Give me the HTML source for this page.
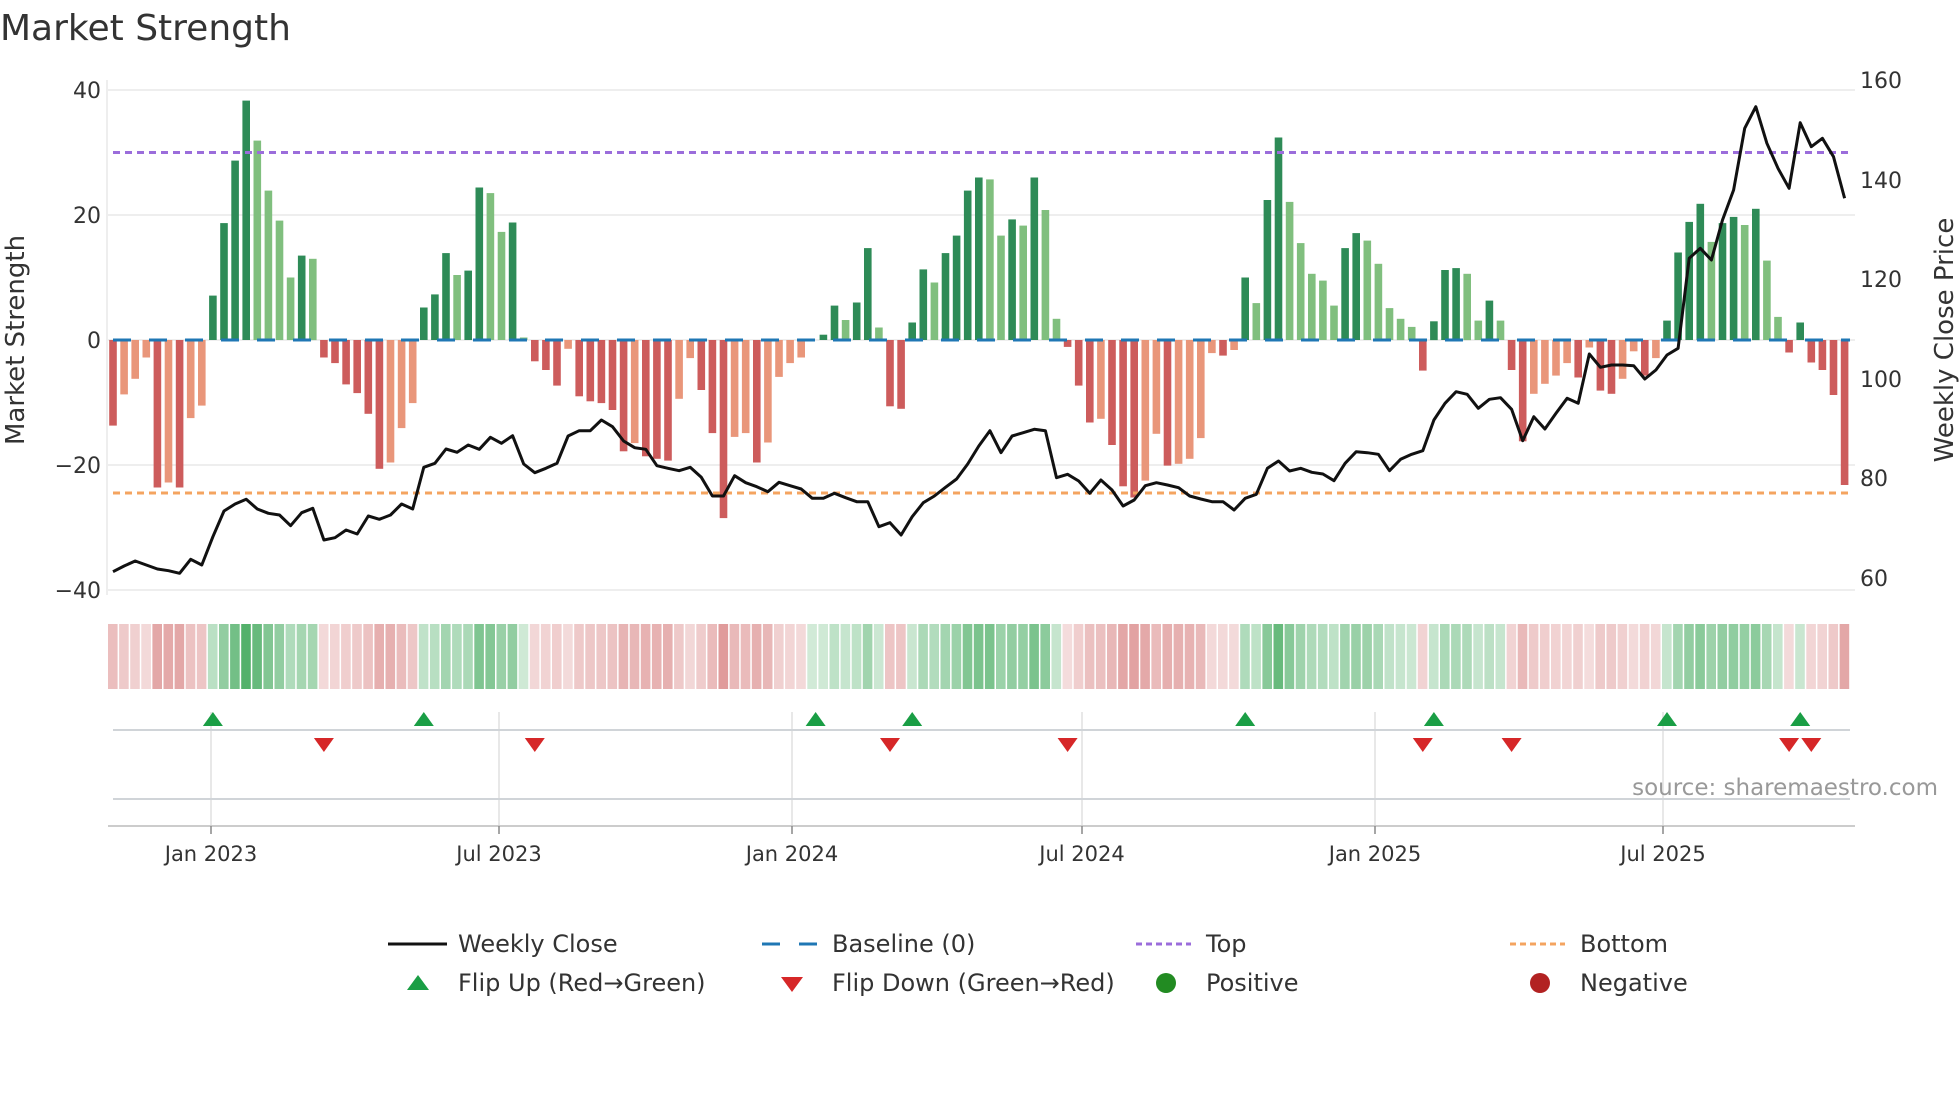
<!DOCTYPE html>
<html><head><meta charset="utf-8">
<style>
html,body{margin:0;padding:0;background:#fff;}
svg{display:block;font-family:"DejaVu Sans","Liberation Sans",sans-serif;}
</style></head>
<body>
<svg id="s" width="1960" height="1102" viewBox="0 0 1960 1102" xmlns="http://www.w3.org/2000/svg">
<rect width="1960" height="1102" fill="#fff"/>
<text x="0" y="40" font-size="36" fill="#333">Market Strength</text>
<g stroke="#eeeeee" stroke-width="2">
<line x1="108" y1="90" x2="1855" y2="90"/>
<line x1="108" y1="215" x2="1855" y2="215"/>
<line x1="108" y1="340" x2="1855" y2="340"/>
<line x1="108" y1="465" x2="1855" y2="465"/>
<line x1="108" y1="590" x2="1855" y2="590"/>
</g>
<line x1="107" y1="80" x2="107" y2="595" stroke="#eeeeee" stroke-width="2"/>
<g font-size="22" fill="#333" text-anchor="end">
<text x="101" y="98">40</text>
<text x="101" y="223">20</text>
<text x="101" y="348">0</text>
<text x="101" y="473">−20</text>
<text x="101" y="598">−40</text>
</g>
<g font-size="22" fill="#333">
<text x="1860" y="88">160</text>
<text x="1860" y="188">140</text>
<text x="1860" y="287">120</text>
<text x="1860" y="387">100</text>
<text x="1860" y="486">80</text>
<text x="1860" y="586">60</text>
</g>
<text transform="translate(24,340) rotate(-90)" font-size="26" fill="#333" text-anchor="middle">Market Strength</text>
<text transform="translate(1953,340) rotate(-90)" font-size="26" fill="#333" text-anchor="middle">Weekly Close Price</text>
<g id="bars"></g>
<line x1="113" y1="340" x2="1850" y2="340" stroke="#1f77b4" stroke-width="3" stroke-dasharray="18 18"/>
<line x1="113" y1="152.5" x2="1850" y2="152.5" stroke="#9b6ddb" stroke-width="3" stroke-dasharray="7 5"/>
<line x1="113" y1="493" x2="1850" y2="493" stroke="#f4a460" stroke-width="3" stroke-dasharray="7 5"/>
<polyline id="price" fill="none" stroke="#111" stroke-width="3" stroke-linejoin="round"/>
<g id="strip"></g>
<g stroke="#e8e8e8" stroke-width="2">
<line x1="211" y1="712" x2="211" y2="826"/>
<line x1="499" y1="712" x2="499" y2="826"/>
<line x1="792" y1="712" x2="792" y2="826"/>
<line x1="1082" y1="712" x2="1082" y2="826"/>
<line x1="1375" y1="712" x2="1375" y2="826"/>
<line x1="1663" y1="712" x2="1663" y2="826"/>
</g>
<line x1="113" y1="730" x2="1850" y2="730" stroke="#d0d4d8" stroke-width="2"/>
<line x1="113" y1="799" x2="1850" y2="799" stroke="#d0d4d8" stroke-width="2"/>
<line x1="108" y1="826" x2="1855" y2="826" stroke="#cccccc" stroke-width="2"/>
<g stroke="#888" stroke-width="1.5">
<line x1="211" y1="826" x2="211" y2="834"/>
<line x1="499" y1="826" x2="499" y2="834"/>
<line x1="792" y1="826" x2="792" y2="834"/>
<line x1="1082" y1="826" x2="1082" y2="834"/>
<line x1="1375" y1="826" x2="1375" y2="834"/>
<line x1="1663" y1="826" x2="1663" y2="834"/>
</g>
<g id="marks"></g>
<g font-size="21" fill="#333" text-anchor="middle">
<text x="211" y="861">Jan 2023</text>
<text x="499" y="861">Jul 2023</text>
<text x="792" y="861">Jan 2024</text>
<text x="1082" y="861">Jul 2024</text>
<text x="1375" y="861">Jan 2025</text>
<text x="1663" y="861">Jul 2025</text>
</g>
<text x="1938" y="795" font-size="23" fill="#999" text-anchor="end">source: sharemaestro.com</text>
<g font-size="24" fill="#333">
<line x1="388" y1="944" x2="447" y2="944" stroke="#111" stroke-width="3"/>
<text x="458" y="952">Weekly Close</text>
<line x1="762" y1="944" x2="817" y2="944" stroke="#1f77b4" stroke-width="3" stroke-dasharray="18 19"/>
<text x="832" y="952">Baseline (0)</text>
<line x1="1136" y1="944" x2="1191" y2="944" stroke="#9b6ddb" stroke-width="3" stroke-dasharray="6 4"/>
<text x="1206" y="952">Top</text>
<line x1="1510" y1="944" x2="1565" y2="944" stroke="#f4a460" stroke-width="3" stroke-dasharray="6 4"/>
<text x="1580" y="952">Bottom</text>
<polygon points="407,990 429,990 418,975" fill="#1a9e45"/>
<text x="458" y="991">Flip Up (Red→Green)</text>
<polygon points="781,977 803,977 792,992" fill="#d62728"/>
<text x="832" y="991">Flip Down (Green→Red)</text>
<circle cx="1166" cy="983" r="10" fill="#228b22"/>
<text x="1206" y="991">Positive</text>
<circle cx="1540" cy="983" r="10" fill="#b22222"/>
<text x="1580" y="991">Negative</text>
</g>
</svg>
<script>
var V=[[-13.7,1],[-8.7,0],[-6.2,0],[-2.8,0],[-23.6,1],[-22.8,0],[-23.6,1],[-12.5,0],[-10.5,0],[7.1,1],[18.7,1],[28.7,1],[38.3,1],[31.9,0],[23.9,0],[19.1,0],[10,0],[13.5,1],[13,0],[-2.8,1],[-3.7,1],[-7.1,1],[-8.5,1],[-11.8,1],[-20.6,1],[-19.6,0],[-14.1,0],[-10.1,0],[5.2,1],[7.3,1],[13.9,1],[10.4,0],[11.1,1],[24.4,1],[23.5,0],[17.3,0],[18.8,1],[0.4,0],[-3.4,1],[-4.8,1],[-7.3,1],[-1.4,0],[-9,1],[-9.8,1],[-10.1,1],[-11.2,1],[-17.8,1],[-16.5,0],[-18.6,1],[-19,1],[-19.3,1],[-9.4,0],[-2.9,0],[-8,1],[-14.9,1],[-28.5,1],[-15.5,0],[-14.9,0],[-19.6,1],[-16.4,0],[-5.9,0],[-3.7,0],[-2.8,0],[0,0],[0.85,1],[5.5,1],[3.2,0],[6,1],[14.7,1],[2,0],[-10.6,1],[-11,1],[2.8,1],[11.3,1],[9.2,0],[13.9,1],[16.7,1],[23.9,1],[26,1],[25.7,0],[16.7,0],[19.3,1],[18.3,0],[26,1],[20.8,0],[3.4,0],[-1.1,1],[-7.3,1],[-13.2,1],[-12.6,0],[-16.8,1],[-23.4,1],[-25.2,1],[-22.5,0],[-15,0],[-20.1,1],[-19.8,0],[-19,0],[-15.7,0],[-2.1,0],[-2.5,1],[-1.6,0],[10,1],[5.9,0],[22.4,1],[32.4,1],[22.1,0],[15.5,0],[10.6,0],[9.5,0],[5.5,0],[14.7,1],[17.1,1],[15.9,0],[12.2,0],[5.1,0],[3.4,0],[2.1,0],[-4.9,1],[3,1],[11.2,1],[11.5,1],[10.6,0],[3.1,0],[6.3,1],[3.1,0],[-4.8,1],[-16.2,1],[-8.6,0],[-7,0],[-5.7,0],[-3.7,0],[-6,1],[-1.2,0],[-8.1,1],[-8.6,1],[-6.2,0],[-1.8,0],[-5.7,1],[-2.9,0],[3.1,1],[14,1],[18.9,1],[21.8,1],[15.7,0],[18.7,1],[19.7,1],[18.4,0],[21,1],[12.7,0],[3.7,0],[-2,1],[2.8,1],[-3.6,1],[-4.8,1],[-8.8,1],[-23.2,1]];
var P=[1475,1458,1443,1455,1467,1472,1480,1438,1455,1370,1293,1272,1258,1287,1300,1305,1337,1298,1285,1380,1373,1350,1362,1308,1318,1305,1272,1287,1162,1150,1107,1117,1095,1108,1072,1090,1067,1152,1178,1165,1150,1068,1052,1052,1020,1040,1083,1103,1108,1157,1165,1172,1162,1192,1248,1248,1187,1208,1220,1235,1207,1217,1227,1255,1255,1240,1253,1265,1265,1340,1328,1365,1310,1268,1248,1222,1197,1152,1098,1052,1118,1068,1058,1048,1052,1193,1183,1203,1240,1200,1230,1278,1260,1217,1208,1215,1223,1248,1257,1265,1265,1290,1255,1243,1165,1143,1173,1165,1177,1182,1202,1150,1115,1118,1123,1172,1138,1123,1112,1020,970,935,943,985,958,953,988,1082,1010,1047,1000,955,970,822,862,855,855,857,897,870,825,805,535,505,540,420,330,145,80,190,265,325,128,200,175,230,355];
var NS="http://www.w3.org/2000/svg";
function el(t,a,p){var e=document.createElementNS(NS,t);for(var k in a)e.setAttribute(k,a[k]);p.appendChild(e);return e;}
var bars=document.getElementById('bars'),strip=document.getElementById('strip'),marks=document.getElementById('marks');
var pts=[];
for(var i=0;i<V.length;i++){
 var x=113+i*11.1,v=V[i][0],d=V[i][1];
 var h=Math.abs(v)*6.25,y=v>=0?340-h:340;
 var c=v>=0?(d?'#2e8b57':'#80bf7e'):(d?'#cd5c5c':'#e9967a');
 if(h>0.5)el('rect',{x:(x-3.8).toFixed(1),y:y.toFixed(1),width:7.6,height:h.toFixed(1),fill:c},bars);
 var a=0.22+0.6*Math.min(Math.abs(v),38)/38;
 var sc=v>=0?'rgba(46,160,75,'+a.toFixed(2)+')':'rgba(200,80,80,'+(a*0.85).toFixed(2)+')';
 el('rect',{x:(x-5).toFixed(1),y:624,width:9.6,height:65,fill:sc},strip);
 pts.push(x.toFixed(1)+','+(P[i]/3+80).toFixed(1));
}
document.getElementById('price').setAttribute('points',pts.join(' '));
var up=[9,28,63.3,72,102,119,140,152],dn=[19,38,70,86,118,126,151,153];
up.forEach(function(k){var x=113+k*11.1;el('polygon',{points:(x-10)+',726 '+(x+10)+',726 '+x+',712',fill:'#1a9e45'},marks);});
dn.forEach(function(k){var x=113+k*11.1;el('polygon',{points:(x-10)+',738 '+(x+10)+',738 '+x+',752',fill:'#d62728'},marks);});
</script>
</body></html>
